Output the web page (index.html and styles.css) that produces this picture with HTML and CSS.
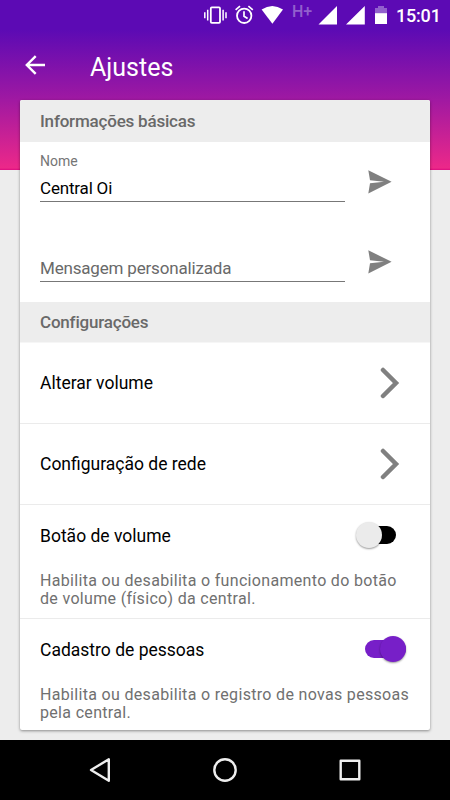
FILE: index.html
```html
<!DOCTYPE html>
<html lang="pt-BR">
<head>
<meta charset="utf-8">
<title>Ajustes</title>
<link rel="stylesheet" href="styles.css">
</head>
<body>
<div class="screen">
  <div class="statusbar">
    <svg width="88" height="32" viewBox="0 0 88 32">
      <g fill="none" stroke="#fff">
        <rect x="11.8" y="7.4" width="9.2" height="15.4" rx="1" stroke-width="1.8"/>
        <path d="M8.7 9.8v10.6M5.8 12.2v6M24.1 9.8v10.6M27 12.2v6" stroke-width="1.5"/>
        <circle cx="45.2" cy="15.8" r="7.2" stroke-width="1.8"/>
        <path d="M45 11.3v5l3.6 2.2M36.6 9.8l4.4-3.7M53.8 9.8l-4.4-3.7" stroke-width="1.7"/>
      </g>
      <path d="M62.6 9.6Q73.3 2.4 84 9.6L73.4 23.8z" fill="#fff"/>
    </svg>
    <span class="network">H+</span>
    <svg width="70" height="32" viewBox="0 0 70 32">
      <path d="M.5 24.5L19 6v18.5zM28 24.5L46.8 6v18.5z" fill="#fff"/>
      <path d="M57 8h3V6h6v2h3v6H57z" fill="#9260cd"/>
      <path d="M57 13.2h12V24H57z" fill="#fff"/>
    </svg>
    <span class="clock">15:01</span>
  </div>
  <header class="appbar">
    <svg class="back" width="20" height="20" viewBox="0 0 20 20" fill="none" stroke="#fff" stroke-width="2.4">
      <path d="M20 10H2M10.7 1.1L1.8 10l8.9 8.9"/>
    </svg>
    <h1>Ajustes</h1>
  </header>
  <main class="card">
    <h2 class="section first">Informações básicas</h2>
    <div class="fields">
      <div class="field">
        <div class="input"><label>Nome</label><span>Central Oi</span></div>
        <svg class="send" width="24" height="24" viewBox="0 0 24 24"><path d="M.3.3L23.6 11.7.3 23.4 2 13.3l14-1.6L2 10.2z"/></svg>
      </div>
      <div class="field">
        <div class="input"><span class="hint">Mensagem personalizada</span></div>
        <svg class="send" width="24" height="24" viewBox="0 0 24 24"><path d="M.3.3L23.6 11.7.3 23.4 2 13.3l14-1.6L2 10.2z"/></svg>
      </div>
    </div>
    <h2 class="section">Configurações</h2>
    <div class="row nav">
      <span class="title">Alterar volume</span>
      <svg class="chevron" width="20" height="32" viewBox="0 0 20 32"><path d="M3 3l13 13L3 29"/></svg>
    </div>
    <div class="row nav">
      <span class="title">Configuração de rede</span>
      <svg class="chevron" width="20" height="32" viewBox="0 0 20 32"><path d="M3 3l13 13L3 29"/></svg>
    </div>
    <div class="row option">
      <div class="option-head"><span class="title">Botão de volume</span><span class="switch"></span></div>
      <p>Habilita ou desabilita o funcionamento do botão<br>de volume (físico) da central.</p>
    </div>
    <div class="row option">
      <div class="option-head"><span class="title">Cadastro de pessoas</span><span class="switch on"></span></div>
      <p>Habilita ou desabilita o registro de novas pessoas<br>pela central.</p>
    </div>
  </main>
  <nav class="navbar">
    <svg width="24" height="26" viewBox="0 0 24 26"><path d="M20.8 2.3v21.4L3 13z"/></svg>
    <svg width="26" height="26" viewBox="0 0 26 26"><circle cx="13" cy="13" r="10.7"/></svg>
    <svg width="24" height="26" viewBox="0 0 24 26"><rect x="2.7" y="3.7" width="18.6" height="18.6"/></svg>
  </nav>
</div>
</body>
</html>
```
FILE: styles.css
```css
* { box-sizing: border-box; }
body { margin: 0; font-family: Roboto, sans-serif; }
h1, h2, p { margin: 0; }
.screen {
  width: 450px; height: 800px; overflow: hidden;
  display: flex; flex-direction: column;
  background: linear-gradient(#5c0ab4 0, #5c0ab4 30px, #9c18a3 96px, #ec2889 168px, #dc0c80 170px) no-repeat 0 0 / 100% 170px #ededed;
}
.statusbar { height: 32px; display: flex; flex: none; padding-left: 199px; color: #fff; }
.statusbar svg { flex: none; }
.network { width: 26px; margin: 0 0 0 5px; font-size: 16px; line-height: 23px; font-weight: 500; color: #9260cd; }
.clock { margin-left: 8px; font-size: 18px; line-height: 32px; font-weight: 500; letter-spacing: -.2px; }
.appbar { height: 68px; flex: none; display: flex; padding-left: 25px; color: #fff; }
.back { margin-top: 23px; }
h1 { margin-left: 45px; font-size: 25px; line-height: 30px; padding-top: 21px; font-weight: 400; }
.card { width: 410px; height: 630px; flex: none; margin: 0 20px; background: #fff; border-radius: 2px; box-shadow: 0 1px 3px rgba(0,0,0,.42); }
.section { height: 41px; padding-left: 20px; background: #ededed; border-bottom: 1px solid #f6f6f6; color: #696969; font-size: 17px; line-height: 40px; font-weight: 500; letter-spacing: -.2px; }
.section.first { height: 42px; line-height: 43px; border: 0; border-radius: 2px 2px 0 0; }
.fields { height: 160px; padding-left: 20px; }
.field { height: 80px; display: flex; }
.input { width: 305px; height: 60px; border-bottom: 1px solid #777; display: flex; flex-direction: column; justify-content: flex-end; font-size: 17px; line-height: 22px; padding-bottom: 2px; letter-spacing: -.18px; }
.input label { color: #757575; font-size: 14px; line-height: 18px; margin-bottom: 7px; letter-spacing: 0; }
.hint { color: #696969; }
.send { margin: 28px 0 0 23px; fill: #808080; }
.row { padding: 0 20px; border-bottom: 1px solid #ebebeb; }
.nav { height: 81px; display: flex; align-items: center; justify-content: space-between; }
.title { font-size: 17.5px; line-height: 24px; }
.chevron { margin: 0 10px 0 0; fill: none; stroke: #808080; stroke-width: 4.5; stroke-linecap: round; }
.option { height: 114px; padding-top: 19px; }
.option:last-child { border: 0; }
.option-head { display: flex; justify-content: space-between; align-items: center; height: 24px; }
.switch { width: 31px; height: 18px; border-radius: 9px; background: #000; margin: -2px 14px 0 0; display: flex; align-items: center; }
.switch::before { content: ""; width: 26px; height: 26px; flex: none; border-radius: 50%; background: #ebebeb; margin-left: -9px; box-shadow: 0 1px 2px rgba(0,0,0,.4); }
.switch.on { background: #771fc8; width: 41px; margin-right: 4px; justify-content: flex-end; }
.switch.on::before { background: #771fc8; margin: 0; }
p { padding-top: 24px; font-size: 16px; line-height: 18px; letter-spacing: .32px; color: #707070; white-space: nowrap; }
.navbar { height: 60px; margin-top: 10px; flex: none; background: #000; display: flex; align-items: center; justify-content: space-between; padding: 0 88px; }
.navbar svg { fill: none; stroke: #eee; stroke-width: 2.4; stroke-linejoin: round; }
```
